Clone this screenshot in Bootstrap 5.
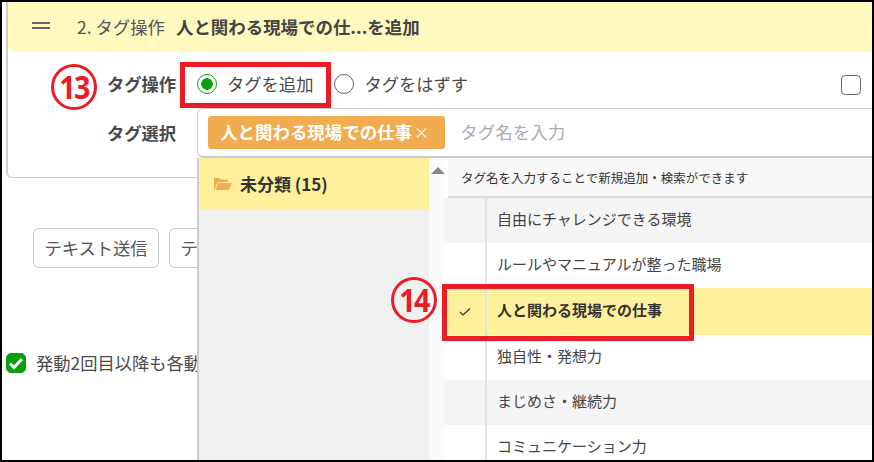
<!DOCTYPE html>
<html lang="ja"><head><meta charset="utf-8">
<link rel="stylesheet" href="https://cdn.jsdelivr.net/npm/bootstrap@5.3.0/dist/css/bootstrap.min.css">
<style>
html,body{margin:0;height:462px;overflow:hidden;background:#000}
body{font-family:"Noto Sans CJK JP","Noto Sans",sans-serif;color:#4a4a4a;font-size:17px}
.frame{position:relative;width:870px;height:458px;margin:2px;background:#fff;overflow:hidden}
.stepcard{margin-left:4px;width:900px;height:176px;border:1px solid #ccc;border-top:0;border-radius:0 0 6px 6px;border-left-width:2px;background:#fff}
.stepcard .card-header{height:50px;background:#fff8bf;border:0;border-radius:0 0 0 6px;padding:0 0 0 24px;gap:27px;font-size:17.4px;color:#555;line-height:50px}
.grip{width:18px;height:7px;border-top:2px solid #666;border-bottom:2px solid #666;margin-top:-3px}
.title-b{font-weight:700;color:#444;margin-left:11px;font-size:17.45px}
.fieldlabel{width:70px;margin-left:99px;font-weight:700;font-size:17.3px;white-space:nowrap;line-height:1}
.oprow{height:56px;position:relative;padding-top:8px}
.form-check-input.radiobox{width:20px;height:20px;margin:0;float:none;border:1px solid #666;flex:none}
.form-check-input.radiobox:checked{background:radial-gradient(circle,#0a9f0a 0 5.500px,#fff 6px);border-color:#0a9f0a}
.optlabel{font-size:17.3px;margin:0 0 0 10px;white-space:nowrap}
.optgap{margin-left:21px}
.optgap.firstopt{margin-left:20px}
.rowcheck{width:20px;height:20px;margin:0 0 0 auto;border:1px solid #666;border-radius:5px;position:absolute;left:833px;top:23px}
.tagfield{margin-left:21px;width:720px;height:50px;border:1px solid #ccc;border-bottom:2px solid #ccc;border-radius:6px 0 0 6px;padding:8px 10px;display:flex;align-items:center;background:#fff}
.tagchip{background:#f0ac4e;color:#fff;font-weight:700;font-size:17.45px;border-radius:3px;height:33px;width:237px;flex:none;display:flex;align-items:center;padding:0 0 0 12px;white-space:nowrap}
.chipx{font-size:15px;font-weight:400;margin-left:2px}
.tagph{color:#a9acb5;margin-left:15px;font-size:17.5px;white-space:nowrap}
.sendbtn{margin:50px 0 0 31px;gap:10px}
.sendbtn .btn{height:40px;width:126px;font-size:17.3px;color:#555;border:1px solid #ccc;border-radius:6px;padding:0;white-space:nowrap;background:#fff}
.againrow{margin:85px 0 0 4px;gap:10px;white-space:nowrap;font-size:17.3px;height:20px;line-height:20px}
.form-check-input.greencheck{width:20px;height:20px;margin:0;flex:none;border-radius:5px;background-color:#0a9f0a;border-color:#0a9f0a;background-size:20px;background-image:url("data:image/svg+xml,%3csvg xmlns='http://www.w3.org/2000/svg' viewBox='0 0 20 20'%3e%3cpath d='M4 10.500l4 4 8-8.500' fill='none' stroke='%23fff' stroke-width='3'/%3e%3c/svg%3e")}
.menu{position:absolute;left:195px;top:156px;right:0;bottom:0;display:flex;background:#fff}
.folders{width:232px;background:#f1f1f1;border-left:2px solid #ccc;flex:none}
.folderitem{height:52px;background:#fff09b;display:flex;align-items:center;padding-left:15px;gap:8px;font-weight:700;font-size:17px;color:#333}
.scrollcol{width:15px;background:#fafafa;flex:none;padding:9px 0 0 2px}
.scrollup{width:0;height:0;border-left:7px solid transparent;border-right:7px solid transparent;border-bottom:7px solid #888}
.tagcol{flex:1;min-width:0}
.hint{height:40px;margin-left:4px;background:#f8f8f8;border-bottom:2px solid #ddd;font-size:12.5px;color:#333;line-height:40px;padding-left:13px;white-space:nowrap}
.taglist{border-radius:0;margin:0}
.taglist .list-group-item{height:45px;border:0;padding:0 0 2px 42px;display:flex;align-items:center;font-size:15px;color:#444;position:relative;background:#fff;white-space:nowrap}
.taglist .list-group-item::before{content:"";position:absolute;left:41px;top:0;bottom:0;width:2px;background:#e4e4e4}
.taglist .list-group-item.zebra{background:#f5f5f5}
.taglist .list-group-item.picked{background:#fff09b;font-weight:700;height:47px;color:#333}
.rowtext{margin-left:11px}
.tick{position:absolute;left:15px;top:19px}
.redbox{position:absolute;border:5px solid #ed1c24;pointer-events:none}
.circnum{position:absolute;width:46px;height:46px;border:3px solid #ed1c24;border-radius:50%;color:#ed1c24;font:700 32px/39px "Open Sans","Noto Sans",sans-serif;text-align:center;letter-spacing:-2px;background:transparent}
.circnum span{display:block;transform:scaleX(.9)}
</style></head>
<body>
<div class="frame">
  <div class="card stepcard">
    <div class="card-header d-flex">
      <span class="grip align-self-center"></span>
      <span class="text-nowrap">2. タグ操作<span class="title-b">人と関わる現場での仕...を追加</span></span>
    </div>
    <div class="oprow d-flex align-items-center">
      <span class="fieldlabel">タグ操作</span>
      <div class="d-flex align-items-center optgap firstopt">
        <input class="form-check-input radiobox" type="radio" name="op" checked>
        <label class="optlabel">タグを追加</label>
      </div>
      <div class="d-flex align-items-center optgap">
        <input class="form-check-input radiobox" type="radio" name="op">
        <label class="optlabel">タグをはずす</label>
      </div>
      <input class="form-check-input rowcheck" type="checkbox">
    </div>
    <div class="d-flex align-items-center">
      <span class="fieldlabel">タグ選択</span>
      <div class="tagfield">
        <span class="tagchip">人と関わる現場での仕事<span class="chipx">×</span></span>
        <span class="tagph">タグ名を入力</span>
      </div>
    </div>
  </div>
  <div class="sendbtn d-flex">
    <button class="btn" type="button">テキスト送信</button>
    <button class="btn" type="button">テキスト送信</button>
  </div>
  <div class="againrow d-flex align-items-center">
    <input class="form-check-input greencheck" type="checkbox" checked>
    <span>発動2回目以降も各動作を実行する</span>
  </div>

  <div class="menu">
    <div class="folders">
      <div class="folderitem">
        <svg width="18" height="12" viewBox="0 0 18 12"><path d="M0 11V1.200C0 .5.5 0 1.200 0H5l1.500 1.600h6.300c.6 0 1 .4 1 1V4H4.200c-.6 0-1 .3-1.200.8L1 11z" fill="#f0ac4e"/><path d="M4.300 5H17.400c.4 0 .7.4.5.8L15.300 11.300c-.2.4-.5.7-1 .7H1.500l2-6.300c.1-.4.4-.7.8-.7z" fill="#f0ac4e"/></svg>
        <span>未分類 (15)</span>
      </div>
    </div>
    <div class="scrollcol"><div class="scrollup"></div></div>
    <div class="tagcol">
      <div class="hint">タグ名を入力することで新規追加・検索ができます</div>
      <div class="list-group taglist">
        <div class="list-group-item zebra"><span class="rowtext">自由にチャレンジできる環境</span></div>
        <div class="list-group-item"><span class="rowtext">ルールやマニュアルが整った職場</span></div>
        <div class="list-group-item picked">
          <svg class="tick" width="12" height="9" viewBox="0 0 12 9"><path d="M1 5l3 3 7-6.500" fill="none" stroke="#333" stroke-width="1.200"/></svg>
          <span class="rowtext">人と関わる現場での仕事</span>
        </div>
        <div class="list-group-item"><span class="rowtext">独自性・発想力</span></div>
        <div class="list-group-item zebra"><span class="rowtext">まじめさ・継続力</span></div>
        <div class="list-group-item"><span class="rowtext">コミュニケーション力</span></div>
      </div>
    </div>
  </div>

  <div class="redbox" style="left:178px;top:60px;width:151px;height:46px"></div>
  <div class="redbox" style="left:440px;top:282px;width:252px;height:57px"></div>
  <div class="circnum" style="left:49px;top:62px"><span>13</span></div>
  <div class="circnum" style="left:389px;top:275px"><span>14</span></div>
</div>
<script src="https://cdn.jsdelivr.net/npm/bootstrap@5.3.0/dist/js/bootstrap.bundle.min.js"></script>
</body></html>
